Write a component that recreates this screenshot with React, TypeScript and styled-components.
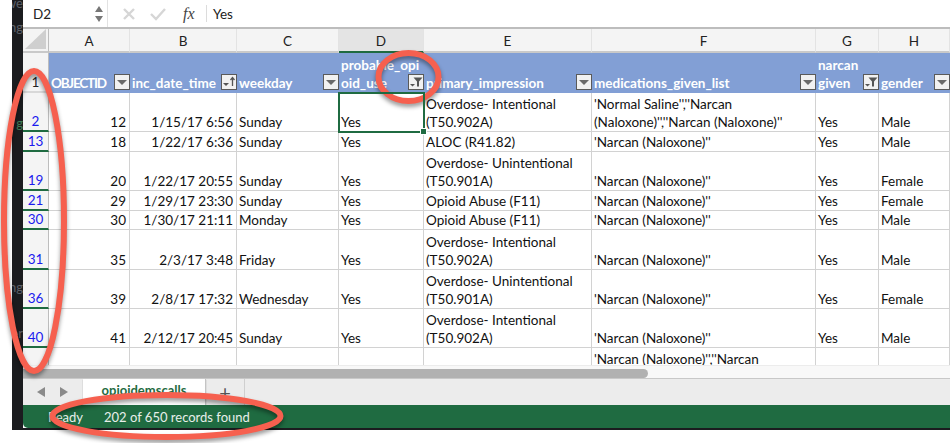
import React from 'react';
import styled, { createGlobalStyle } from 'styled-components';

const GlobalStyle = createGlobalStyle`
  html, body {
    margin: 0;
    padding: 0;
    background: #fff;
    overflow: hidden;
  }
`;

const COLUMNS = '26px 81px 107px 102px 85px 168px 224px 63px 71px';
const GREEN = '#1f6b41';
const GRID_LINE = '#d2d2d2';

const Page = styled.div`
  position: relative;
  display: flex;
  width: 950px;
  height: 443px;
  overflow: hidden;
  background: #fff;
  font-family: Lato, 'Liberation Sans', sans-serif;
`;
const Gutter = styled.div`
  display: flex;
  flex-direction: column;
  align-items: flex-end;
  width: 11px;
  height: 430px;
  margin-left: 12px;
  overflow: hidden;
  background: #1b1c1f;
`;
const GutterWord = styled.span<{ $top: number; $color?: string }>`
  margin-top: ${(p) => p.$top}px;
  font-size: 13px;
  line-height: 14px;
  color: ${(p) => p.$color || '#5d6068'};
  white-space: nowrap;
`;
const Sheet = styled.div`
  display: flex;
  flex-direction: column;
  flex: 1;
  height: 430px;
  min-width: 0;
  background: #fff;
  border-bottom: 2px solid #1b1c1f;
  box-sizing: border-box;
`;

const FormulaBar = styled.div`
  display: flex;
  align-items: center;
  height: 27px;
  background: #fff;
  border-bottom: 2px solid #bdbdbd;
  flex: none;
`;
const NameBox = styled.div`
  display: flex;
  align-items: center;
  justify-content: space-between;
  width: 85px;
  height: 100%;
  padding: 0 3px 0 10px;
  box-sizing: border-box;
  border-right: 1px solid #e2e2e2;
  font-size: 13.5px;
  color: #222;
`;
const BarIcons = styled.div`
  display: flex;
  align-items: center;
  gap: 13px;
  padding-left: 13px;
`;
const FxLabel = styled.span`
  width: 23px;
  padding-left: 4px;
  font-family: 'Liberation Serif', serif;
  font-style: italic;
  font-size: 16px;
  color: #444;
`;
const BarDivider = styled.div`
  width: 1px;
  height: 17px;
  background: #dcdcdc;
`;
const FormulaText = styled.div`
  padding-left: 6px;
  font-size: 13.5px;
  color: #222;
`;

const Grid = styled.div`
  flex: 1;
  min-height: 0;
  overflow: hidden;
`;
const HeaderRow = styled.div`
  display: grid;
  grid-template-columns: ${COLUMNS};
  height: 24px;
  background: #f4f4f4;
`;
const ColLetter = styled.div<{ $active?: boolean }>`
  display: flex;
  align-items: center;
  justify-content: center;
  padding-top: 2px;
  box-sizing: border-box;
  font-size: 13.5px;
  color: #222;
  border-right: 1px solid #e3e3e3;
  border-bottom: 2px solid ${(p) => (p.$active ? GREEN : '#c9c9c9')};
  background: ${(p) => (p.$active ? '#e4e4e4' : '#f4f4f4')};
`;
const Corner = styled.div`
  display: flex;
  align-items: flex-end;
  justify-content: flex-end;
  padding: 0 2px 2px 0;
  box-sizing: border-box;
  background: #f4f4f4;
  border-right: 1px solid #bdbdbd;
  border-bottom: 2px solid #c9c9c9;
`;
const Row = styled.div<{ $h: number }>`
  display: grid;
  grid-template-columns: ${COLUMNS};
  height: ${(p) => p.$h}px;
`;
const RowNum = styled.div<{ $filtered?: boolean }>`
  display: flex;
  align-items: flex-end;
  justify-content: center;
  box-sizing: border-box;
  font-size: 13.5px;
  line-height: 17px;
  color: ${(p) => (p.$filtered ? '#1a1aee' : '#222')};
  background: #f4f4f4;
  border-right: 1px solid #bdbdbd;
  border-bottom: 2px solid ${(p) => (p.$filtered ? GREEN : '#d8d8d8')};
`;
const TitleCell = styled.div`
  position: relative;
  display: flex;
  align-items: flex-end;
  padding: 0 0 1px 2px;
  box-sizing: border-box;
  background: #829fd5;
  color: #fff;
  font-weight: 700;
  font-size: 13.5px;
  line-height: 18px;
  white-space: pre;
  overflow: hidden;
`;
const TitleText = styled.span<{ $caps?: boolean }>`
  letter-spacing: ${(p) => (p.$caps ? '-1.2px' : '0')};
`;
const FilterBox = styled.svg`
  position: absolute;
  right: 0;
  bottom: 3px;
`;
const Cell = styled.div<{ $right?: boolean; $selected?: boolean }>`
  position: relative;
  display: flex;
  align-items: flex-end;
  justify-content: ${(p) => (p.$right ? 'flex-end' : 'flex-start')};
  padding: 0 3px 0 2px;
  box-sizing: border-box;
  font-size: 13.5px;
  line-height: 18px;
  color: #111;
  white-space: pre-line;
  border-right: 1px solid ${GRID_LINE};
  border-bottom: 1px solid ${GRID_LINE};
  ${(p) => p.$selected && `outline: 2px solid ${GREEN}; outline-offset: -1px; z-index: 1;`}
`;
const FillHandle = styled.span`
  position: absolute;
  right: -4px;
  bottom: -4px;
  width: 5px;
  height: 5px;
  background: ${GREEN};
  border: 1px solid #fff;
`;

const ScrollTrack = styled.div`
  height: 14px;
  flex: none;
  padding-top: 3px;
  box-sizing: border-box;
  background: #f8f8f8;
  border-top: 1px solid #ececec;
  border-bottom: 1px solid #c8c8c8;
`;
const ScrollThumb = styled.div`
  width: 625px;
  height: 9px;
  background: #b1b1b1;
  border-radius: 0 5px 5px 0;
`;

const TabBar = styled.div`
  display: flex;
  align-items: stretch;
  height: 26px;
  flex: none;
  background: #ececec;
`;
const TabNav = styled.div`
  display: flex;
  align-items: center;
  gap: 15px;
  width: 60px;
  padding-left: 14px;
  box-sizing: border-box;
`;
const Tab = styled.div`
  display: flex;
  justify-content: center;
  width: 123px;
  padding-top: 2px;
  box-sizing: border-box;
  background: #fff;
  border-right: 1px solid #c4c4c4;
  box-shadow: 0 1px 1px #9a9a9a;
  color: ${GREEN};
  font-weight: 700;
  font-size: 13px;
  line-height: 18px;
`;
const AddTab = styled.div`
  display: flex;
  align-items: center;
  justify-content: center;
  width: 38px;
  border-right: 1px solid #cfcfcf;
  font-size: 20px;
  color: #555;
`;
const StatusBar = styled.div`
  display: flex;
  align-items: center;
  gap: 21px;
  height: 23px;
  flex: none;
  padding-left: 25px;
  background: ${GREEN};
  border-radius: 0 0 0 5px;
  color: #e7efea;
  font-size: 13px;
`;

const Annotations = styled.svg`
  position: absolute;
  inset: 0;
  width: 950px;
  height: 443px;
  pointer-events: none;
  filter: drop-shadow(0 3px 2px rgba(0, 0, 0, 0.4));
`;

type FilterKind = 'plain' | 'sort' | 'filter';

function FilterButton({ kind = 'plain' }: { kind?: FilterKind }) {
  return (
    <FilterBox width="16" height="16" viewBox="0 0 16 16">
      <rect x="0.5" y="0.5" width="15" height="15" fill="#f1f1f1" stroke="#5a5a5a" />
      {kind === 'plain' && <path d="M3 6h10l-5 5z" fill="#6a6a6a" />}
      {kind === 'sort' && (
        <>
          <path d="M2 9h6l-3 3z" fill="#555" />
          <path d="M11.5 12V4M9.5 6l2-2.5 2 2.5" fill="none" stroke="#555" strokeWidth="1.3" />
        </>
      )}
      {kind === 'filter' && (
        <>
          <path d="M2 10h5l-2.5 2.500z" fill="#555" />
          <path d="M5.500 3.500h9l-3.500 4v5h-2v-5z" fill="#555" />
        </>
      )}
    </FilterBox>
  );
}

function ToolGlyph({ d }: { d: string }) {
  return (
    <svg width="16" height="14" viewBox="0 0 16 14">
      <path d={d} fill="none" stroke="#d6d6d6" strokeWidth="2.4" />
    </svg>
  );
}

const letters = ['A', 'B', 'C', 'D', 'E', 'F', 'G', 'H'];

const titles: { text: string; kind?: FilterKind; caps?: boolean }[] = [
  { text: 'OBJECTID', caps: true },
  { text: 'inc_date_time', kind: 'sort' },
  { text: 'weekday' },
  { text: 'probable_opi\noid_use', kind: 'filter' },
  { text: 'primary_impression' },
  { text: 'medications_given_list' },
  { text: 'narcan\ngiven', kind: 'filter' },
  { text: 'gender' },
];

const OD_INT = 'Overdose- Intentional\n(T50.902A)';
const OD_UN = 'Overdose- Unintentional\n(T50.901A)';
const NARCAN = "'Narcan (Naloxone)''";

const rows = [
  { n: 2, h: 39, id: 12, date: '1/15/17 6:56', day: 'Sunday', imp: OD_INT, med: "'Normal Saline'',''Narcan\n(Naloxone)'',''Narcan (Naloxone)''", gender: 'Male' },
  { n: 13, h: 20, id: 18, date: '1/22/17 6:36', day: 'Sunday', imp: 'ALOC (R41.82)', med: NARCAN, gender: 'Male' },
  { n: 19, h: 39, id: 20, date: '1/22/17 20:55', day: 'Sunday', imp: OD_UN, med: NARCAN, gender: 'Female' },
  { n: 21, h: 20, id: 29, date: '1/29/17 23:30', day: 'Sunday', imp: 'Opioid Abuse (F11)', med: NARCAN, gender: 'Female' },
  { n: 30, h: 19, id: 30, date: '1/30/17 21:11', day: 'Monday', imp: 'Opioid Abuse (F11)', med: NARCAN, gender: 'Male' },
  { n: 31, h: 40, id: 35, date: '2/3/17 3:48', day: 'Friday', imp: OD_INT, med: NARCAN, gender: 'Male' },
  { n: 36, h: 39, id: 39, date: '2/8/17 17:32', day: 'Wednesday', imp: OD_UN, med: NARCAN, gender: 'Female' },
  { n: 40, h: 39, id: 41, date: '2/12/17 20:45', day: 'Sunday', imp: OD_INT, med: NARCAN, gender: 'Male' },
];

export default function App() {
  return (
    <>
      <GlobalStyle />
      <Page>
        <Gutter>
          <GutterWord $top={-4}>we</GutterWord>
          <GutterWord $top={10}>ng</GutterWord>
          <GutterWord $top={82} $color="#3f7d55">g</GutterWord>
          <GutterWord $top={150}>ng</GutterWord>
          <GutterWord $top={32}>er</GutterWord>
        </Gutter>
        <Sheet>
          <FormulaBar>
            <NameBox>
              D2
              <svg width="10" height="20" viewBox="0 0 10 20">
                <path d="M5 2l4 6H1z" fill="#777" />
                <path d="M5 18l4-6H1z" fill="#777" />
              </svg>
            </NameBox>
            <BarIcons>
              <ToolGlyph d="M3 2l10 10M13 2L3 12" />
              <ToolGlyph d="M1 7l5 5 9-10" />
              <FxLabel>fx</FxLabel>
            </BarIcons>
            <BarDivider />
            <FormulaText>Yes</FormulaText>
          </FormulaBar>
          <Grid>
            <HeaderRow>
              <Corner>
                <svg width="21" height="20" viewBox="0 0 21 20">
                  <path d="M21 0v20H0z" fill="#cfcfcf" />
                </svg>
              </Corner>
              {letters.map((l) => (
                <ColLetter key={l} $active={l === 'D'}>{l}</ColLetter>
              ))}
            </HeaderRow>
            <Row $h={40}>
              <RowNum>1</RowNum>
              {titles.map((t) => (
                <TitleCell key={t.text}>
                  <TitleText $caps={t.caps}>{t.text}</TitleText>
                  <FilterButton kind={t.kind} />
                </TitleCell>
              ))}
            </Row>
            {rows.map((r, i) => (
              <Row key={r.n} $h={r.h}>
                <RowNum $filtered>{r.n}</RowNum>
                <Cell $right>{r.id}</Cell>
                <Cell $right>{r.date}</Cell>
                <Cell>{r.day}</Cell>
                <Cell $selected={i === 0}>
                  Yes
                  {i === 0 && <FillHandle />}
                </Cell>
                <Cell>{r.imp}</Cell>
                <Cell>{r.med}</Cell>
                <Cell>Yes</Cell>
                <Cell>{r.gender}</Cell>
              </Row>
            ))}
            <Row $h={39}>
              <RowNum />
              <Cell />
              <Cell />
              <Cell />
              <Cell />
              <Cell />
              <Cell>{"'Narcan (Naloxone)'',''Narcan\n(Naloxone)''"}</Cell>
              <Cell />
              <Cell />
            </Row>
          </Grid>
          <ScrollTrack>
            <ScrollThumb />
          </ScrollTrack>
          <TabBar>
            <TabNav>
              <svg width="8" height="12" viewBox="0 0 8 12"><path d="M8 1v10L0 6z" fill="#8a8a8a" /></svg>
              <svg width="8" height="12" viewBox="0 0 8 12"><path d="M0 1v10l8-5z" fill="#8a8a8a" /></svg>
            </TabNav>
            <Tab>opioidemscalls</Tab>
            <AddTab>+</AddTab>
          </TabBar>
          <StatusBar>
            <span>Ready</span>
            <span>202 of 650 records found</span>
          </StatusBar>
        </Sheet>
        <Annotations viewBox="0 0 950 443">
          <g fill="none" stroke="#f6604f" strokeWidth="6">
            <ellipse cx="34" cy="221" rx="30" ry="150" />
            <ellipse cx="408.500" cy="77" rx="30" ry="24" />
            <ellipse cx="166.500" cy="416" rx="114" ry="21" />
          </g>
        </Annotations>
      </Page>
    </>
  );
}
